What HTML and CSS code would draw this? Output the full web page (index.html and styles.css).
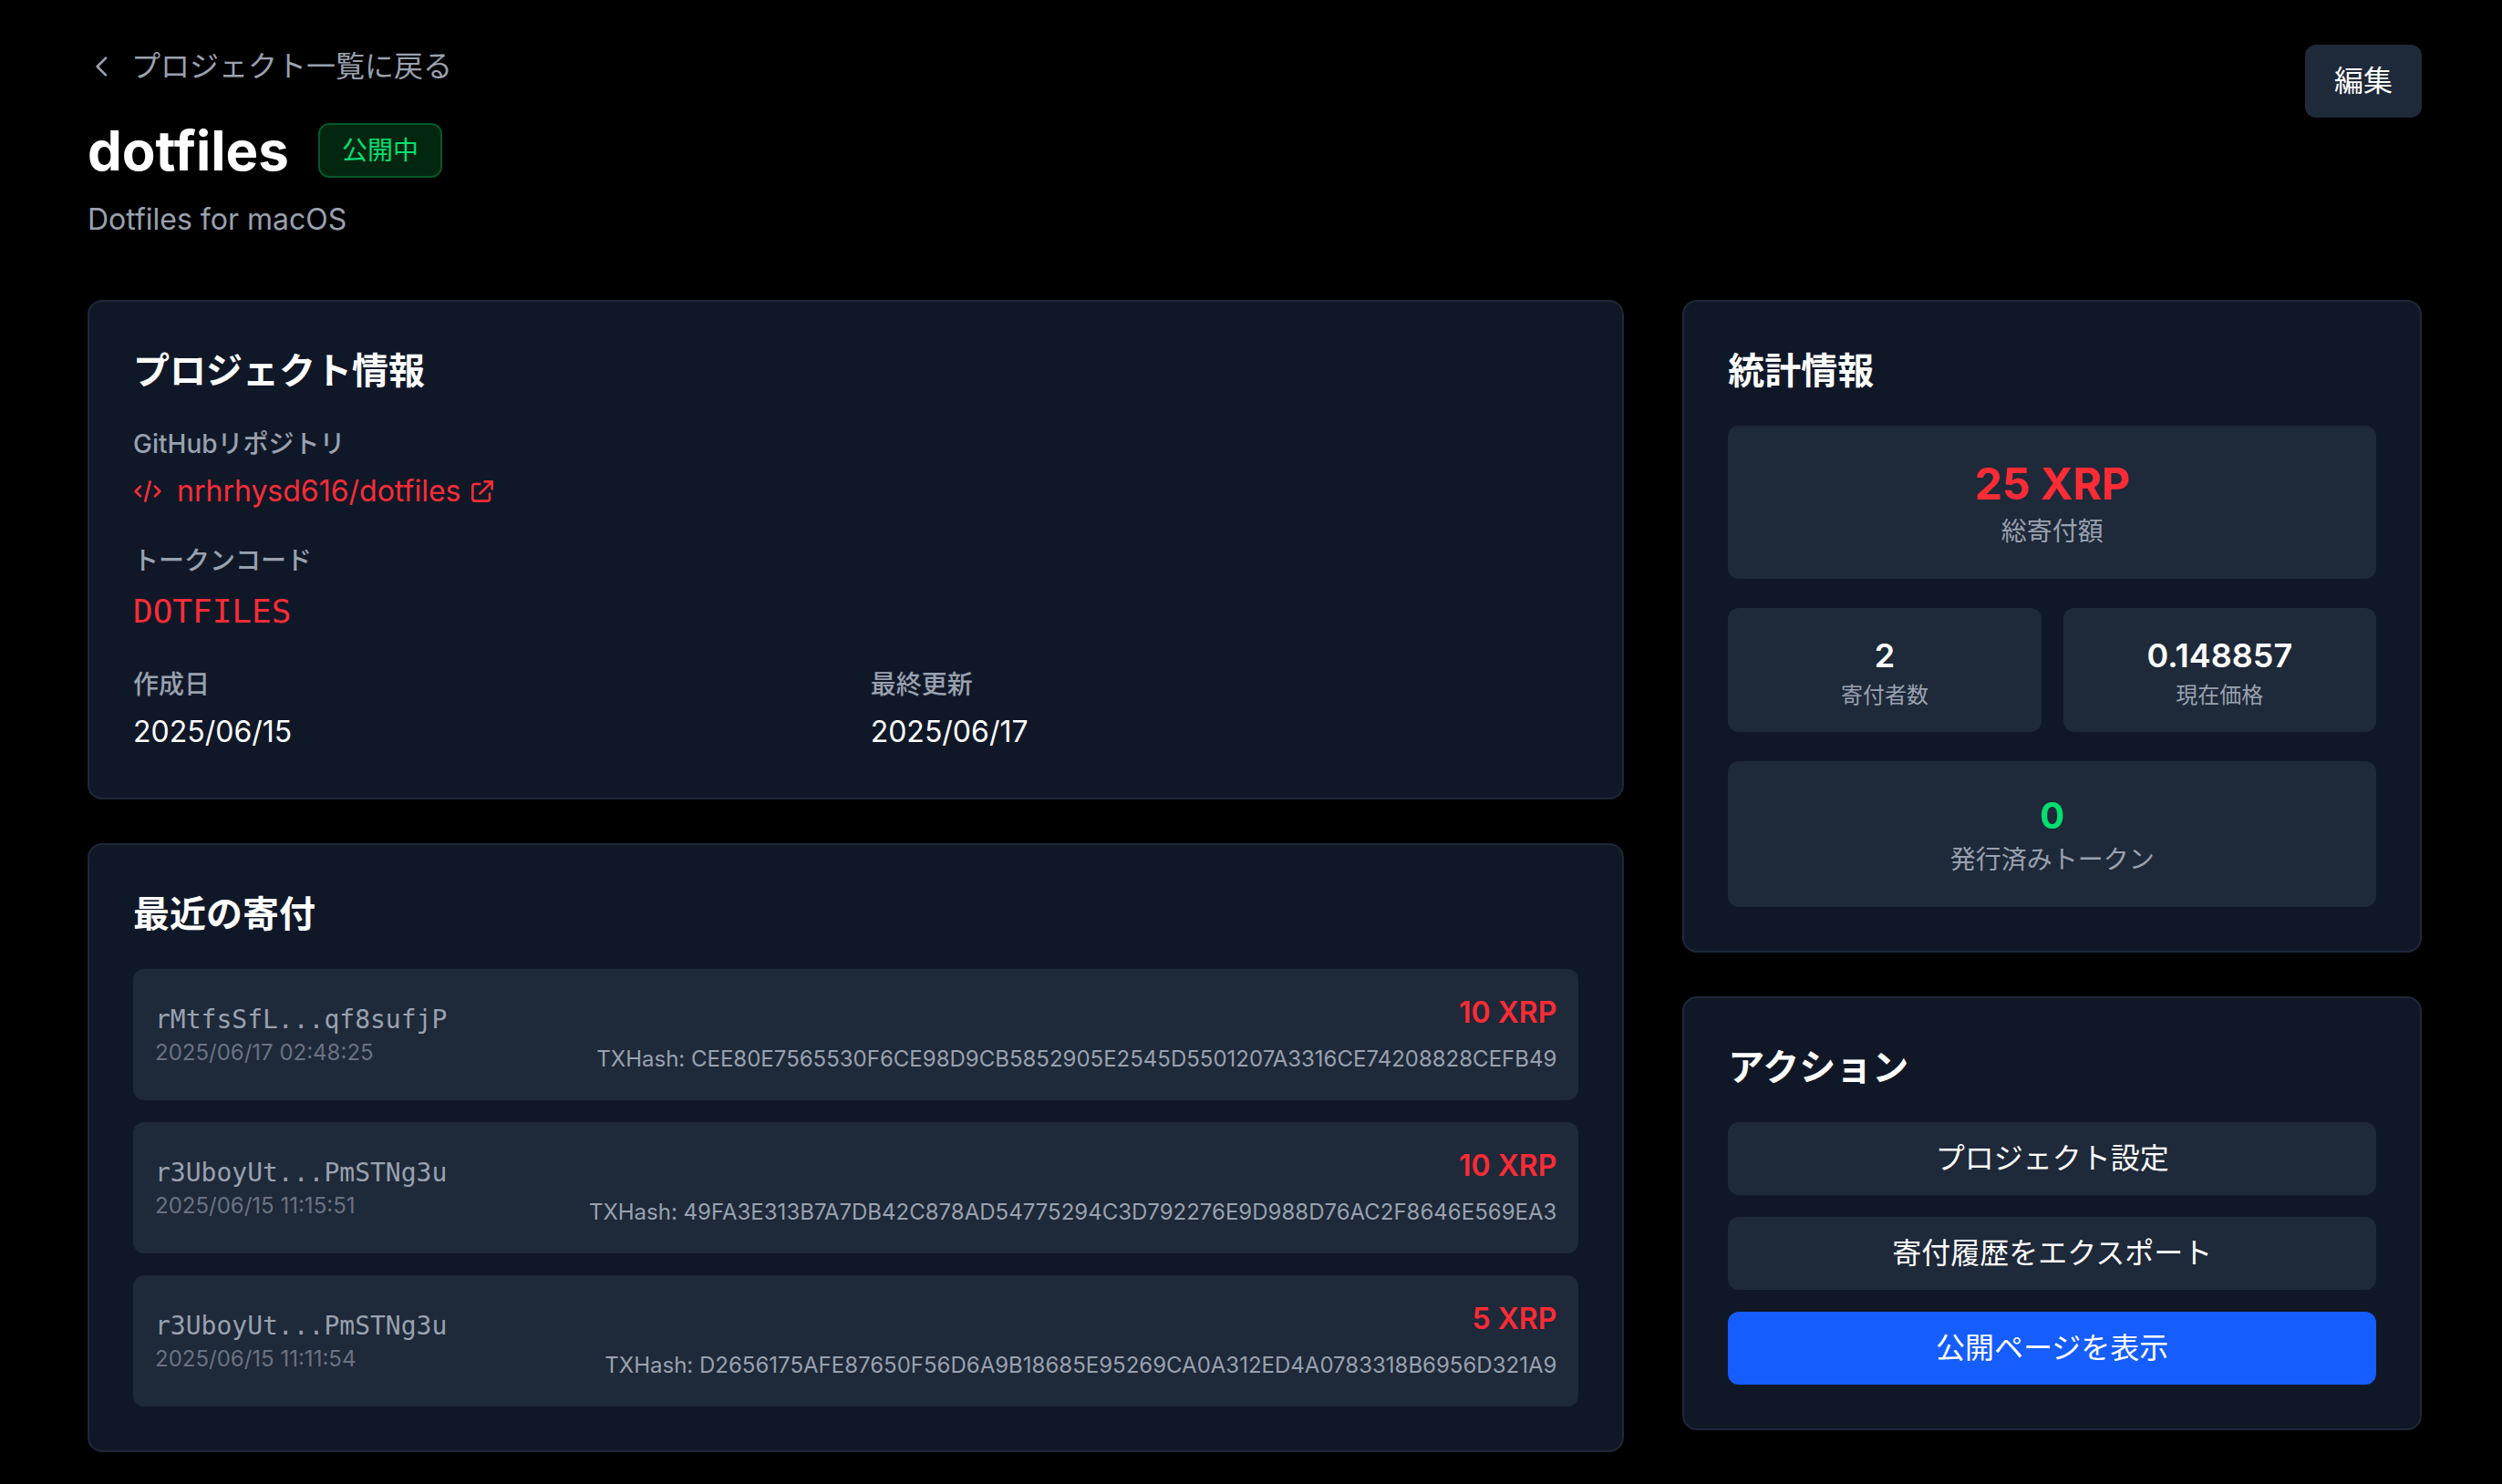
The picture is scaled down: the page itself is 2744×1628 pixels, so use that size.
FILE: index.html
```html
<!DOCTYPE html>
<html lang="ja">
<head>
  <meta charset="utf-8">
  <meta name="viewport" content="width=device-width, initial-scale=1">
  <title>dotfiles</title>
  <link rel="stylesheet" href="styles.css">
</head>
<body>
  <div class="page">
    <header class="header">
      <div class="header-main">
        <a class="back" href="#">
          <svg class="icon" viewBox="0 0 24 24" fill="none" stroke="currentColor" stroke-width="2" stroke-linecap="round" stroke-linejoin="round" aria-hidden="true"><path d="M15 19l-7-7 7-7"/></svg>
          プロジェクト一覧に戻る
        </a>
        <div class="title-row">
          <h1 class="title">dotfiles</h1>
          <span class="badge">公開中</span>
        </div>
        <p class="description">Dotfiles for macOS</p>
      </div>
      <button class="button" type="button">編集</button>
    </header>

    <main class="columns">
      <div class="stack">
        <section class="card">
          <h2 class="card-title">プロジェクト情報</h2>
          <dl class="info">
            <div class="info-item info-wide">
              <dt class="label">GitHubリポジトリ</dt>
              <dd class="value">
                <a class="repo" href="#">
                  <svg class="icon" viewBox="0 0 24 24" fill="none" stroke="currentColor" stroke-width="2" stroke-linecap="round" stroke-linejoin="round" aria-hidden="true"><path d="M10 20l4-16m4 4l4 4-4 4M6 16l-4-4 4-4"/></svg>
                  <span class="repo-name">nrhrhysd616/dotfiles</span>
                  <svg class="icon" viewBox="0 0 24 24" fill="none" stroke="currentColor" stroke-width="2" stroke-linecap="round" stroke-linejoin="round" aria-hidden="true"><path d="M10 6H6a2 2 0 0 0-2 2v10a2 2 0 0 0 2 2h10a2 2 0 0 0 2-2v-4M14 4h6m0 0v6m0-6L10 14"/></svg>
                </a>
              </dd>
            </div>
            <div class="info-item info-wide">
              <dt class="label">トークンコード</dt>
              <dd class="value token">DOTFILES</dd>
            </div>
            <div class="info-item">
              <dt class="label">作成日</dt>
              <dd class="value">2025/06/15</dd>
            </div>
            <div class="info-item">
              <dt class="label">最終更新</dt>
              <dd class="value">2025/06/17</dd>
            </div>
          </dl>
        </section>

        <section class="card">
          <h2 class="card-title">最近の寄付</h2>
          <ul class="donations">
            <li class="donation">
              <div>
                <p class="address">rMtfsSfL...qf8sufjP</p>
                <p class="time">2025/06/17 02:48:25</p>
              </div>
              <div class="donation-side">
                <p class="amount">10 XRP</p>
                <p><span class="hash">TXHash: CEE80E7565530F6CE98D9CB5852905E2545D5501207A3316CE74208828CEFB49</span></p>
              </div>
            </li>
            <li class="donation">
              <div>
                <p class="address">r3UboyUt...PmSTNg3u</p>
                <p class="time">2025/06/15 11:15:51</p>
              </div>
              <div class="donation-side">
                <p class="amount">10 XRP</p>
                <p><span class="hash">TXHash: 49FA3E313B7A7DB42C878AD54775294C3D792276E9D988D76AC2F8646E569EA3</span></p>
              </div>
            </li>
            <li class="donation">
              <div>
                <p class="address">r3UboyUt...PmSTNg3u</p>
                <p class="time">2025/06/15 11:11:54</p>
              </div>
              <div class="donation-side">
                <p class="amount">5 XRP</p>
                <p><span class="hash">TXHash: D2656175AFE87650F56D6A9B18685E95269CA0A312ED4A0783318B6956D321A9</span></p>
              </div>
            </li>
          </ul>
        </section>
      </div>

      <aside class="stack">
        <section class="card">
          <h2 class="card-title">統計情報</h2>
          <div class="stats">
            <div class="stat">
              <p class="stat-value stat-total">25 XRP</p>
              <p class="stat-label">総寄付額</p>
            </div>
            <div class="stat-pair">
              <div class="stat stat-small">
                <p class="stat-value">2</p>
                <p class="stat-label">寄付者数</p>
              </div>
              <div class="stat stat-small">
                <p class="stat-value">0.148857</p>
                <p class="stat-label">現在価格</p>
              </div>
            </div>
            <div class="stat">
              <p class="stat-value stat-issued">0</p>
              <p class="stat-label">発行済みトークン</p>
            </div>
          </div>
        </section>

        <section class="card">
          <h2 class="card-title">アクション</h2>
          <div class="actions">
            <button class="button" type="button">プロジェクト設定</button>
            <button class="button" type="button">寄付履歴をエクスポート</button>
            <button class="button button-primary" type="button">公開ページを表示</button>
          </div>
        </section>
      </aside>
    </main>
  </div>
</body>
</html>
```
FILE: styles.css
```css
:root {
  --surface: #101828;
  --raised: #1e2939;
  --muted: #99a1af;
  --faint: #6a7282;
  --red: #fb2c36;
  --green: #05df72;
  --blue: #155dfc;
  --sans: Inter, "Noto Sans CJK JP", sans-serif;
  --mono: "DejaVu Sans Mono", "Liberation Mono", monospace;
}

* {
  box-sizing: border-box;
  margin: 0;
  padding: 0;
}

body {
  background: #000;
  color: #fff;
  font: 32px/48px var(--sans);
}

a {
  color: inherit;
  text-decoration: none;
}

.page {
  padding: 49px 88px 32px 96px;
}

.header {
  display: flex;
  align-items: flex-start;
  justify-content: space-between;
  margin-bottom: 64px;
}

.back {
  display: flex;
  align-items: center;
  gap: 16px;
  width: fit-content;
  margin-bottom: 32px;
  color: var(--muted);
}

.icon {
  flex: none;
  width: 32px;
  height: 32px;
}

.title-row {
  display: flex;
  align-items: center;
  gap: 32px;
  margin-bottom: 16px;
}

.title {
  font-size: 60px;
  line-height: 72px;
  font-weight: 700;
}

.badge {
  padding: 8px 24px;
  border: 2px solid #015a2a;
  border-radius: 12px;
  background: #02260f;
  color: var(--green);
  font-size: 28px;
  line-height: 40px;
}

.description {
  color: var(--muted);
}

.button {
  padding: 16px 32px;
  border: 0;
  border-radius: 12px;
  background: var(--raised);
  color: #fff;
  font: inherit;
  cursor: pointer;
}

.button-primary {
  background: var(--blue);
}

.columns {
  display: grid;
  grid-template-columns: repeat(3, minmax(0, 1fr));
  gap: 64px;
  align-items: start;
}

.stack {
  display: grid;
  gap: 48px;
}

.stack:first-child {
  grid-column: span 2;
}

.card {
  min-width: 0;
  padding: 48px;
  border: 2px solid var(--raised);
  border-radius: 16px;
  background: var(--surface);
}

.card-title {
  margin-bottom: 32px;
  font-size: 40px;
  line-height: 56px;
  font-weight: 700;
}

.info {
  display: grid;
  grid-template-columns: repeat(2, minmax(0, 1fr));
  gap: 32px;
}

.info-wide {
  grid-column: 1 / -1;
}

.label {
  margin-bottom: 8px;
  color: var(--muted);
  font-size: 28px;
  line-height: 40px;
  font-weight: 500;
}

.repo {
  display: flex;
  align-items: center;
  width: fit-content;
  color: var(--red);
}

.repo-name {
  margin: 0 8px 0 16px;
}

.token {
  color: var(--red);
  font-family: var(--mono);
  font-size: 36px;
  line-height: 56px;
}

.donations {
  display: grid;
  gap: 24px;
  list-style: none;
}

.donation {
  display: flex;
  align-items: center;
  justify-content: space-between;
  padding: 24px;
  border-radius: 12px;
  background: var(--raised);
}

.donation-side {
  text-align: right;
}

.address {
  color: var(--muted);
  font-family: var(--mono);
  font-size: 28px;
  line-height: 40px;
}

.time {
  color: var(--faint);
  font-size: 24px;
  line-height: 32px;
}

.amount {
  color: var(--red);
  font-weight: 600;
}

.hash {
  color: var(--muted);
  font-size: 24px;
  line-height: 32px;
}

.stats {
  display: grid;
  gap: 32px;
}

.stat-pair {
  display: grid;
  grid-template-columns: repeat(2, minmax(0, 1fr));
  gap: 24px;
}

.stat {
  padding: 32px;
  border-radius: 12px;
  background: var(--raised);
  text-align: center;
}

.stat-value {
  font-size: 36px;
  line-height: 56px;
  font-weight: 700;
}

.stat-total {
  color: var(--red);
  font-size: 48px;
  line-height: 64px;
}

.stat-issued {
  color: var(--green);
  font-size: 40px;
}

.stat-label {
  color: var(--muted);
  font-size: 28px;
  line-height: 40px;
}

.stat-small {
  padding: 24px;
}

.stat-small .stat-value {
  font-weight: 600;
}

.stat-small .stat-label {
  font-size: 24px;
  line-height: 32px;
}

.actions {
  display: grid;
  gap: 24px;
}
```
